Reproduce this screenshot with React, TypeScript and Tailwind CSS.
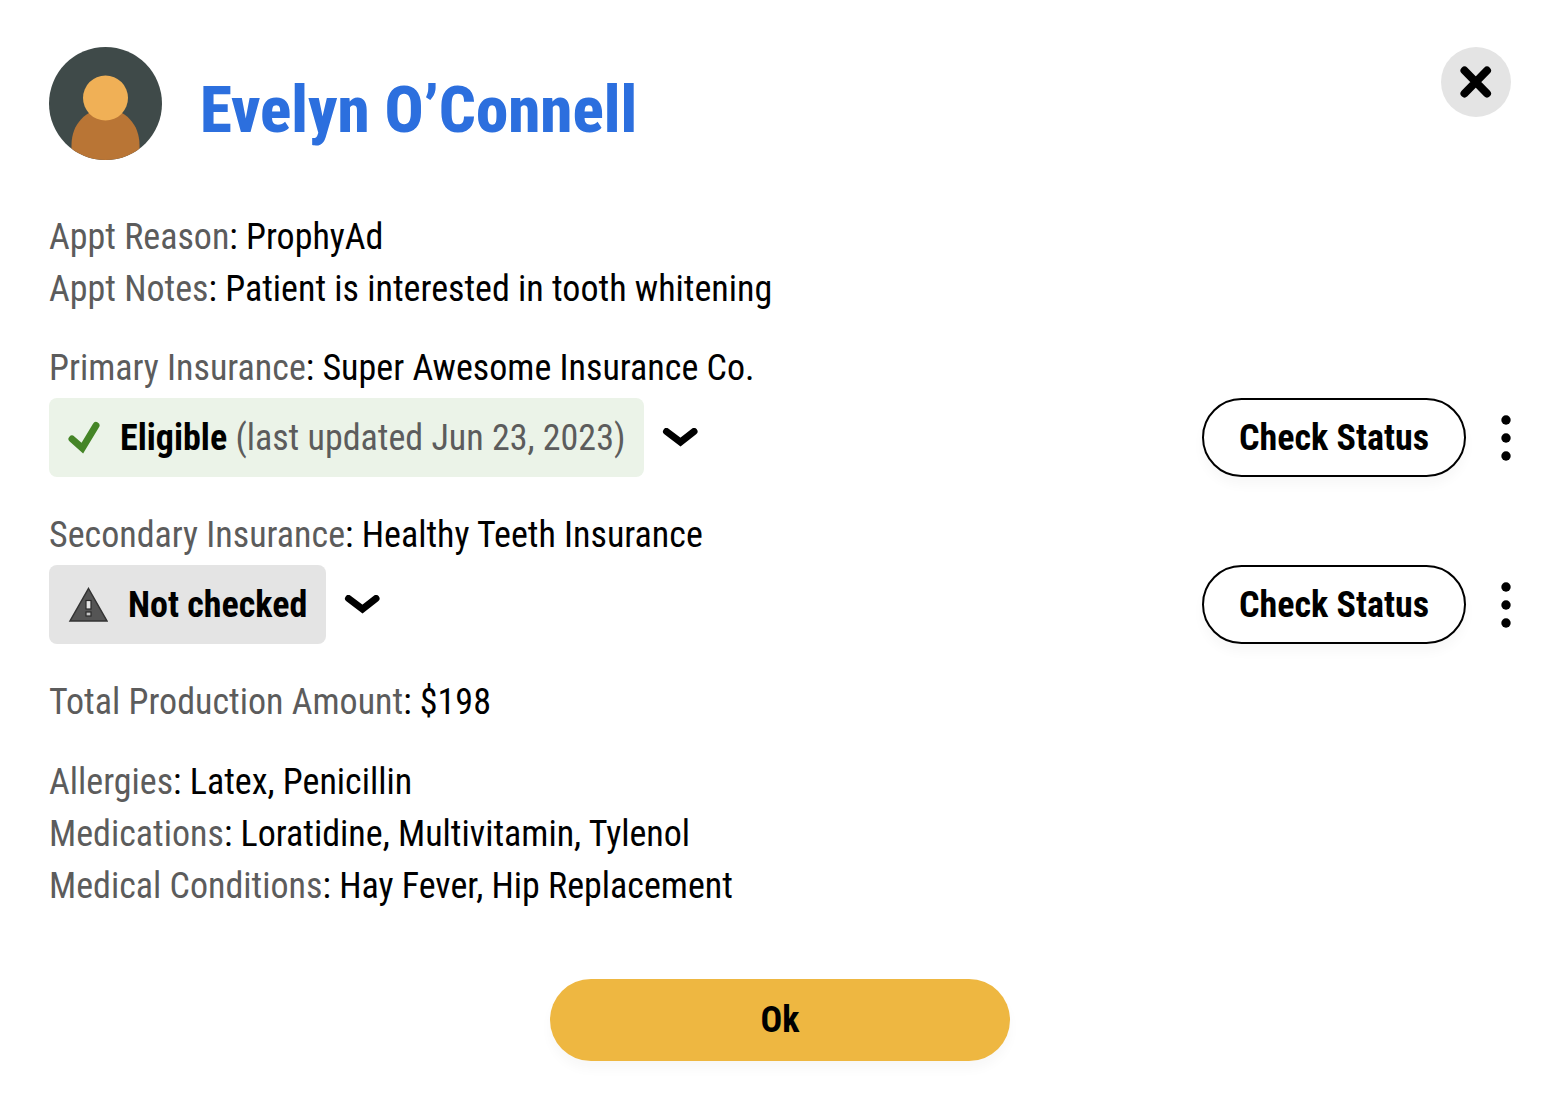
import React, { useState } from 'react';

const patient = {
    name: 'Evelyn O’Connell',
    reason: 'ProphyAd',
    notes: 'Patient is interested in tooth whitening',
    production: '$198',
    allergies: 'Latex, Penicillin',
    medications: 'Loratidine, Multivitamin, Tylenol',
    conditions: 'Hay Fever, Hip Replacement',
};

const Avatar = () => (
    <svg viewBox="0 0 113 113" className="size-[113px] shrink-0" aria-hidden="true">
        <clipPath id="avatar-circle">
            <circle cx="56.5" cy="56.5" r="56.5" />
        </clipPath>
        <g clipPath="url(#avatar-circle)">
            <rect width="113" height="113" fill="#3f4a49" />
            <path d="M22.5 113V98C22.5 77 37 62 56.5 62S90.5 77 90.5 98V113Z" fill="#b97535" />
            <circle cx="56.5" cy="51" r="22.5" fill="#f0b056" />
        </g>
    </svg>
);

const CloseIcon = () => (
    <svg viewBox="0 0 32 32" className="size-8" aria-hidden="true">
        <path d="M4.5 4.5L27 27.500M27 4.500L4.500 27.500" stroke="#000" strokeWidth="8" strokeLinecap="round" />
    </svg>
);

const CheckIcon = () => (
    <svg viewBox="0 0 32 34" className="w-8 h-[34px]" fill="none" aria-hidden="true">
        <path d="M4 18L14.3 27.200L28 4.500" stroke="#458527" strokeWidth="7" strokeLinecap="round" strokeLinejoin="miter" />
    </svg>
);

const WarningIcon = () => (
    <svg viewBox="0 0 40 36" className="w-10 h-9" aria-hidden="true">
        <path d="M20.500 1.500L39 34H2Z" fill="#555" stroke="#333" strokeWidth="1.500" />
        <rect x="18" y="13.500" width="5" height="8.500" fill="#e4e4e4" stroke="#2a2a2a" strokeWidth="1.200" />
        <rect x="18" y="25" width="5" height="4" fill="#c4c4c4" stroke="#2a2a2a" strokeWidth="1.200" />
    </svg>
);

const ChevronIcon = () => (
    <svg viewBox="0 0 36 20" className="w-9 h-5" fill="none" aria-hidden="true">
        <path d="M4.500 3.500L18.500 14L32 3.500" stroke="#000" strokeWidth="7" strokeLinecap="round" strokeLinejoin="miter" />
    </svg>
);

const DotsIcon = () => (
    <svg viewBox="0 0 10 46" className="w-[10px] h-[46px]" aria-hidden="true">
        <circle cx="5" cy="5" r="4.7" />
        <circle cx="5" cy="23" r="4.7" />
        <circle cx="5" cy="41" r="4.7" />
    </svg>
);

const Field = ({ label, value }: { label: string; value: string }) => (
    <p>
        <span className="text-[#5c5c5c]">{label}</span>: {value}
    </p>
);

type InsuranceProps = {
    label: string;
    company: string;
    children: React.ReactNode;
};

const Insurance = ({ label, company, children }: InsuranceProps) => (
    <section className="mb-8">
        <Field label={label} value={company} />
        <div className="flex items-center mt-1">
            {children}
            <button aria-label={`Show ${label} details`} className="ml-[18px]">
                <ChevronIcon />
            </button>
            <button className="ml-auto h-[79px] w-[264px] rounded-full border-2 border-black bg-white font-bold shadow-[0_8px_12px_rgba(0,0,0,0.03)]">
                Check Status
            </button>
            <button aria-label={`${label} options`} className="ml-[35px]">
                <DotsIcon />
            </button>
        </div>
    </section>
);

const App = () => {
    const [open, setOpen] = useState(true);

    if (!open) return null;

    return (
        <main
            role="dialog"
            aria-labelledby="patient-name"
            className="min-h-screen bg-white pl-[49px] pr-[50px] pt-[47px] pb-10 font-['Roboto_Condensed','Roboto',sans-serif] text-[36px] leading-[52px] text-black">
            {/* Header */}
            <header className="flex items-start mb-[51px]">
                <Avatar />
                <h1 id="patient-name" className="ml-[38px] mt-4 text-[65px] leading-[94px] font-extrabold text-[#2c6fde]">
                    {patient.name}
                </h1>
                <button
                    aria-label="Close"
                    onClick={() => setOpen(false)}
                    className="ml-auto size-[70px] rounded-full bg-[#e4e4e4] flex items-center justify-center">
                    <CloseIcon />
                </button>
            </header>

            {/* Appointment */}
            <section className="mb-[27px]">
                <Field label="Appt Reason" value={patient.reason} />
                <Field label="Appt Notes" value={patient.notes} />
            </section>

            {/* Insurance */}
            <Insurance label="Primary Insurance" company="Super Awesome Insurance Co.">
                <div className="flex items-center h-[79px] rounded-lg bg-[#ebf3e8] px-[19px]">
                    <CheckIcon />
                    <p className="ml-5 text-[#5c5c5c]">
                        <strong className="text-black">Eligible</strong> (last updated Jun 23, 2023)
                    </p>
                </div>
            </Insurance>
            <Insurance label="Secondary Insurance" company="Healthy Teeth Insurance">
                <div className="flex items-center h-[79px] rounded-lg bg-[#e4e4e4] px-[19px]">
                    <WarningIcon />
                    <strong className="ml-5">Not checked</strong>
                </div>
            </Insurance>

            <section className="mb-7">
                <Field label="Total Production Amount" value={patient.production} />
            </section>

            {/* Medical history */}
            <section>
                <Field label="Allergies" value={patient.allergies} />
                <Field label="Medications" value={patient.medications} />
                <Field label="Medical Conditions" value={patient.conditions} />
            </section>

            <button
                onClick={() => setOpen(false)}
                className="block mx-auto mt-[67px] h-[82px] w-[460px] rounded-full bg-[#eeb741] font-bold shadow-[0_8px_12px_rgba(0,0,0,0.03)]">
                Ok
            </button>
        </main>
    );
};

export default App;
